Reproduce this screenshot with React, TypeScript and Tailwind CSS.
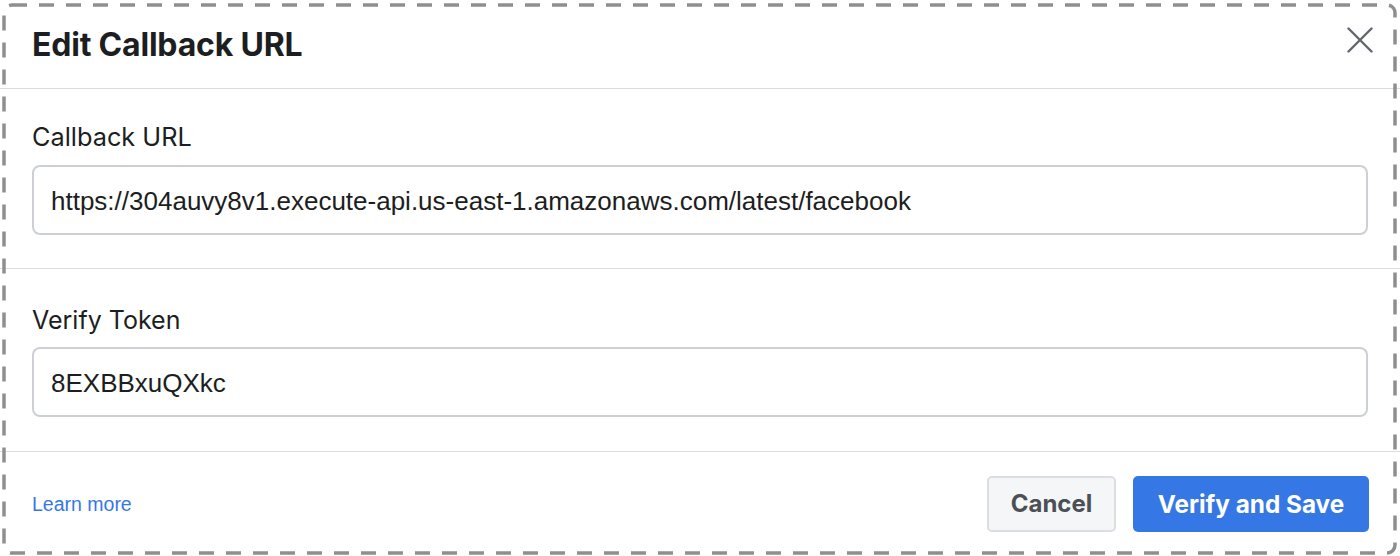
export default function App() {
  return (
    <div className="relative w-[1400px] h-[556px] bg-white overflow-hidden font-['Inter',sans-serif] text-[#1c1e21]">
      <div className="h-[89px] border-b border-[#dadde1] flex items-center justify-between px-8">
        <h1 className="text-[32px] font-bold tracking-[-0.2px] text-[#1c1e21] mt-[2px]">Edit Callback URL</h1>
        <button className="w-[32px] h-[32px] flex items-center justify-center mr-[-8px] mt-[-8px]">
          <svg width="26" height="26" viewBox="0 0 26 26" fill="none">
            <path d="M1.5 1.5 L24.5 24.5 M24.5 1.5 L1.5 24.5" stroke="#606770" strokeWidth="2.4" strokeLinecap="round" />
          </svg>
        </button>
      </div>

      <div className="h-[180px] border-b border-[#dadde1] px-8 pt-[33px]">
        <label className="block text-[25.3px] leading-[29px] text-[#1c1e21]">Callback URL</label>
        <div className="mt-[14px] h-[70px] rounded-[8px] border-2 border-[#ccd0d5] flex items-center pl-[17px] pt-[2px]">
          <span className="font-['Liberation_Sans',Arial,sans-serif] text-[26px] text-[#1c1e21]">
            https://304auvy8v1.execute-api.us-east-1.amazonaws.com/latest/facebook
          </span>
        </div>
      </div>

      <div className="h-[183px] border-b border-[#dadde1] px-8 pt-[37px]">
        <label className="block text-[25px] leading-[29px] text-[#1c1e21]">Verify Token</label>
        <div className="mt-[12px] h-[70px] rounded-[8px] border-2 border-[#ccd0d5] flex items-center pl-[17px] pt-[2px]">
          <span className="font-['Liberation_Sans',Arial,sans-serif] text-[26px] text-[#1c1e21]">8EXBBxuQXkc</span>
        </div>
      </div>

      <div className="h-[104px] flex items-center justify-between px-8">
        <a className="font-['Liberation_Sans',Arial,sans-serif] text-[19.5px] text-[#3578e5] mt-[2px]" href="#">
          Learn more
        </a>
        <div className="flex items-center gap-[17px] mr-[-1px]">
          <button className="w-[129px] h-[56px] rounded-[5px] border-2 border-[#dadde1] bg-[#f5f6f7] text-[24px] font-bold text-[#4b4f56]">
            Cancel
          </button>
          <button className="w-[236px] h-[56px] rounded-[5px] bg-[#3578e5] text-[24.3px] font-bold text-white">
            Verify and Save
          </button>
        </div>
      </div>

      <svg className="absolute inset-0 pointer-events-none" width="1400" height="556" viewBox="0 0 1400 556">
        <rect x="4" y="5" width="1391" height="548" rx="8" fill="none" stroke="#8f8f8f" strokeWidth="3.5" strokeDasharray="15 12" />
      </svg>
    </div>
  );
}
